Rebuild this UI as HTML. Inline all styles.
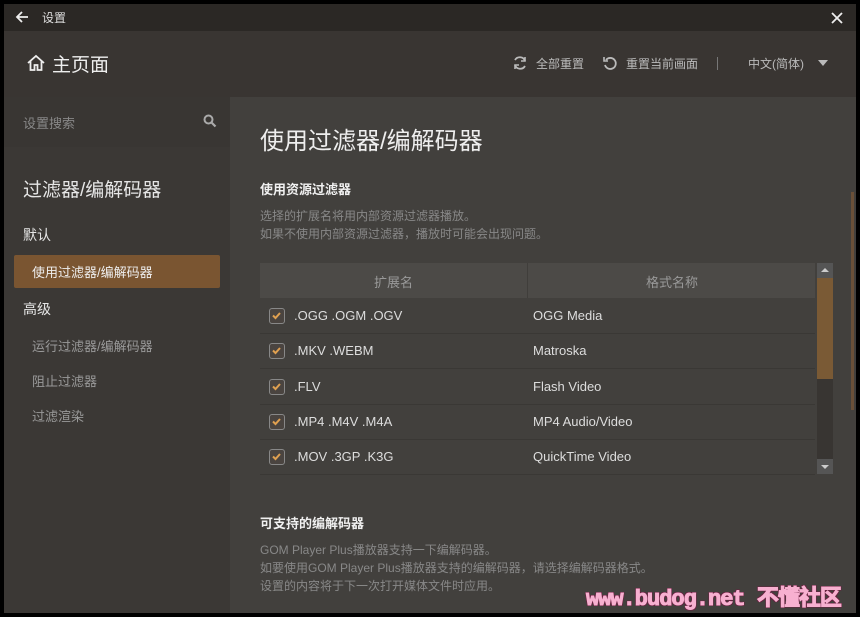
<!DOCTYPE html><html><head><meta charset="utf-8"><style>
*{margin:0;padding:0;box-sizing:border-box}
body{width:860px;height:617px;background:#000;position:relative;overflow:hidden;font-family:"Liberation Sans","Noto Sans CJK SC",sans-serif;color:#ddd}
.a{position:absolute}
.t{position:absolute;white-space:nowrap}
</style></head><body>
<div class="a" style="left:4px;top:4px;width:852px;height:27px;background:#2b2825"></div>
<div class="a" style="left:4px;top:31px;width:852px;height:66px;background:#393532"></div>
<div class="a" style="left:4px;top:97px;width:226px;height:516px;background:#3b3835"></div>
<div class="a" style="left:4px;top:97px;width:226px;height:50px;background:#393633"></div>
<div class="a" style="left:230px;top:97px;width:626px;height:516px;background:#42403d"></div>
<svg class="a" style="left:14px;top:9px" width="16" height="16" viewBox="0 0 16 16"><path d="M14 8H3M8 3L3 8l5 5" stroke="#eee" stroke-width="1.8" fill="none"/></svg>
<div class="t" style="left:42px;top:9px;font-size:12px;color:#ddd">设置</div>
<svg class="a" style="left:830px;top:11px" width="14" height="14" viewBox="0 0 14 14"><path d="M2 2l10 10M12 2L2 12" stroke="#eee" stroke-width="1.8"/></svg>
<svg class="a" style="left:26px;top:54px" width="20" height="18" viewBox="0 0 20 18"><path d="M2 9L10 2l8 7M4.5 7v9h4v-5h3v5h4V7" stroke="#eee" stroke-width="1.8" fill="none"/></svg>
<div class="t" style="left:52px;top:50px;font-size:19px;color:#eee">主页面</div>
<svg class="a" style="left:512px;top:55px" width="16" height="16" viewBox="0 0 16 16"><path d="M13 6A5.5 5.5 0 0 0 3 5M3 10a5.5 5.5 0 0 0 10 1" stroke="#bbb" stroke-width="1.8" fill="none"/><path d="M13 2v4h-4M3 14v-4h4" stroke="#bbb" stroke-width="1.6" fill="none"/></svg>
<div class="t" style="left:536px;top:55px;font-size:12px;color:#bbb">全部重置</div>
<svg class="a" style="left:602px;top:55px" width="16" height="16" viewBox="0 0 16 16"><path d="M4 5a5.5 5.5 0 1 1-1 5" stroke="#bbb" stroke-width="1.8" fill="none"/><path d="M2 2v4h4" stroke="#bbb" stroke-width="1.6" fill="none"/></svg>
<div class="t" style="left:626px;top:55px;font-size:12px;color:#bbb">重置当前画面</div>
<div class="a" style="left:717px;top:57px;width:1px;height:13px;background:#777"></div>
<div class="t" style="left:748px;top:55px;font-size:12px;color:#bbb">中文(简体)</div>
<div class="a" style="left:818px;top:60px;border-left:5px solid transparent;border-right:5px solid transparent;border-top:6px solid #bbb"></div>
<div class="t" style="left:23px;top:113px;font-size:13px;color:#888">设置搜索</div>
<svg class="a" style="left:203px;top:114px" width="14" height="14" viewBox="0 0 14 14"><circle cx="5.5" cy="5.5" r="4" stroke="#aaa" stroke-width="2" fill="none"/><path d="M8.5 8.5l4 4" stroke="#aaa" stroke-width="2.2"/></svg>
<div class="t" style="left:23px;top:175px;font-size:19px;color:#e6e6e6">过滤器/编解码器</div>
<div class="t" style="left:23px;top:225px;font-size:14px;color:#e6e6e6">默认</div>
<div class="a" style="left:14px;top:255px;width:206px;height:33px;background:#7a5531;border-radius:2px"></div>
<div class="t" style="left:32px;top:262px;font-size:13px;color:#eee">使用过滤器/编解码器</div>
<div class="t" style="left:23px;top:299px;font-size:14px;color:#e6e6e6">高级</div>
<div class="t" style="left:32px;top:336px;font-size:13px;color:#999">运行过滤器/编解码器</div>
<div class="t" style="left:32px;top:371px;font-size:13px;color:#999">阻止过滤器</div>
<div class="t" style="left:32px;top:406px;font-size:13px;color:#999">过滤渲染</div>
<div class="t" style="left:260px;top:121px;font-size:24px;color:#eee">使用过滤器/编解码器</div>
<div class="t" style="left:260px;top:179px;font-size:13px;font-weight:bold;color:#f0f0f0">使用资源过滤器</div>
<div class="t" style="left:260px;top:207px;font-size:12px;color:#888;line-height:18px">选择的扩展名将用内部资源过滤器播放。<br>如果不使用内部资源过滤器，播放时可能会出现问题。</div>
<div class="a" style="left:260px;top:263px;width:555px;height:35px;background:#4c4a47"></div>
<div class="a" style="left:527px;top:263px;width:1px;height:35px;background:#403e3b"></div>
<div class="t" style="left:374px;top:272px;font-size:13px;color:#999">扩展名</div>
<div class="t" style="left:646px;top:272px;font-size:13px;color:#999">格式名称</div>
<div class="a" style="left:817px;top:263px;width:16px;height:211px;background:#383532"></div>
<div class="a" style="left:817px;top:263px;width:16px;height:15px;background:#555"></div>
<div class="a" style="left:821px;top:268px;border-left:4px solid transparent;border-right:4px solid transparent;border-bottom:4px solid #ccc"></div>
<div class="a" style="left:817px;top:278px;width:16px;height:101px;background:#7a5a35"></div>
<div class="a" style="left:817px;top:459px;width:16px;height:15px;background:#555"></div>
<div class="a" style="left:821px;top:465px;border-left:4px solid transparent;border-right:4px solid transparent;border-top:4px solid #ccc"></div>
<div class="a" style="left:851px;top:192px;width:3px;height:218px;background:#6a5038"></div>
<div id="rows"></div>
<div class="t" style="left:260px;top:513px;font-size:13px;font-weight:bold;color:#f0f0f0">可支持的编解码器</div>
<div class="t" style="left:260px;top:541px;font-size:12px;color:#888;line-height:18px">GOM Player Plus播放器支持一下编解码器。<br>如要使用GOM Player Plus播放器支持的编解码器，请选择编解码器格式。<br>设置的内容将于下一次打开媒体文件时应用。</div>
<div class="t" style="left:586px;top:580px;font-size:22px;font-weight:bold;color:#f7b0d0;font-family:'Liberation Mono',monospace;letter-spacing:-1px;-webkit-text-stroke:1px #f7b0d0;text-shadow:1px 1px 0 #6a2040,-1px -1px 0 #6a2040,1px -1px 0 #6a2040,-1px 1px 0 #6a2040">www.budog.net <span style="font-family:'Noto Sans CJK SC',sans-serif">不懂社区</span></div>
<script>
var d=[[".OGG .OGM .OGV","OGG Media"],[".MKV .WEBM","Matroska"],[".FLV","Flash Video"],[".MP4 .M4V .M4A","MP4 Audio/Video"],[".MOV .3GP .K3G","QuickTime Video"]],h="";
d.forEach(function(r,i){var y=298+i*35.3;
h+='<div class="a" style="left:260px;top:'+(y+35)+'px;width:555px;height:1px;background:#3a3835"></div>';
h+='<div class="a" style="left:269px;top:'+(y+10)+'px;width:16px;height:16px;border:1.5px solid #888;border-radius:3px;background:#4a4440"><svg width="13" height="13" viewBox="0 0 13 13" style="position:absolute;left:0;top:0"><path d="M3 6.5l2.5 2.5L10 4" stroke="#e0a050" stroke-width="2" fill="none"/></svg></div>';
h+='<div class="t" style="left:294px;top:'+(y+10)+'px;font-size:13px;color:#ddd">'+r[0]+'</div>';
h+='<div class="t" style="left:533px;top:'+(y+10)+'px;font-size:13px;color:#ddd">'+r[1]+'</div>';});
document.getElementById("rows").innerHTML=h;
</script>
</body></html>
